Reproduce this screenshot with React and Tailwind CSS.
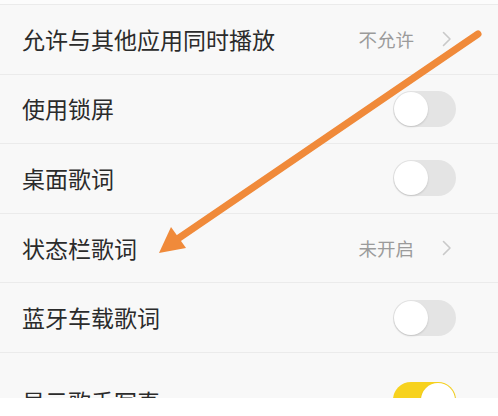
import React from "react";

const rows = [
  { label: "允许与其他应用同时播放", value: "不允许" },
  { label: "使用锁屏", toggle: false },
  { label: "桌面歌词", toggle: false },
  { label: "状态栏歌词", value: "未开启" },
  { label: "蓝牙车载歌词", toggle: false },
  { label: "显示歌手写真", toggle: true, last: true },
];

function Chevron() {
  return (
    <svg width="10" height="16" viewBox="0 0 10 16" className="ml-[28px] mr-[46px]">
      <path d="M1.5 1.5 L8 8 L1.5 14.5" fill="none" stroke="#c9c9c9" strokeWidth="1.6" strokeLinecap="round" strokeLinejoin="round" />
    </svg>
  );
}

function Toggle({ on }) {
  return (
    <div
      className={
        "mr-[42px] flex h-[36px] w-[63px] items-center rounded-full p-[1px] " +
        (on ? "justify-end bg-[#f7d21e]" : "justify-start bg-[#e4e4e4]")
      }
    >
      <div className="h-[34px] w-[34px] rounded-full bg-white shadow-[0_1px_2px_rgba(0,0,0,0.15)]" />
    </div>
  );
}

export default function App() {
  return (
    <div
      className="relative h-[416px] w-[498px] overflow-hidden bg-white"
      style={{ fontFamily: '"Noto Sans CJK SC", "Noto Sans", sans-serif' }}
    >
      <div className="h-[398px] overflow-hidden bg-[#f8f8f8]">
        <div className="h-[4px] bg-[#fcfcfc]" />
        {rows.map((r, i) =>
          r.last ? (
            <div
              key={i}
              className="flex h-[80px] items-start justify-between border-t border-[#ebebeb] pl-[22px] pt-[29px]"
            >
              <span className="mt-[8px] text-[23px] leading-none text-[#2b2b2b]">{r.label}</span>
              <Toggle on={r.toggle} />
            </div>
          ) : (
            <div
              key={i}
              className="flex h-[69.6px] items-center justify-between border-t border-[#ebebeb] pl-[22px]"
            >
              <span className="text-[23px] leading-none text-[#2b2b2b]">{r.label}</span>
              {r.value ? (
                <div className="flex items-center">
                  <span className="text-[18.5px] leading-none text-[#9b9b9b]">{r.value}</span>
                  <Chevron />
                </div>
              ) : (
                <Toggle on={r.toggle} />
              )}
            </div>
          )
        )}
      </div>
      <svg className="pointer-events-none absolute left-0 top-0" width="498" height="416" viewBox="0 0 498 416">
        <line x1="478" y1="34" x2="176" y2="240" stroke="#f08a3a" strokeWidth="7" strokeLinecap="round" />
        <polygon points="159,253 171,227 186,248" fill="#f08a3a" />
      </svg>
    </div>
  );
}
